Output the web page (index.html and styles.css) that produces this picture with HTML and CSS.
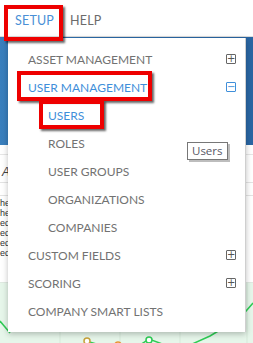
FILE: index.html
```html
<!DOCTYPE html>
<html lang="en">
<head>
  <meta charset="UTF-8">
  <meta name="viewport" content="width=device-width, initial-scale=1.0">
  <title>Setup menu</title>
  <link rel="stylesheet" href="styles.css">
</head>
<body>
  <div class="screen">
    <div class="topnav">
      <span class="nav-item active">SETUP</span>
      <span class="nav-item">HELP</span>
    </div>

    <div class="backdrop">
      <div class="hero"></div>
      <div class="grid">
        <div class="grid-row head"><span class="frag letter">A</span></div>
        <div class="grid-row thin"></div>
        <div class="grid-lines">
          <div>he</div><div>he</div><div>ed</div><div>ed</div><div>ed</div><div>ed</div>
        </div>
      </div>
      <div class="chart">
        <svg width="253" height="62" viewBox="0 0 253 62">
          <g stroke="#d6e9da" stroke-width="1">
            <line x1="60" y1="0" x2="60" y2="62"/>
            <line x1="120" y1="0" x2="120" y2="62"/>
            <line x1="180" y1="0" x2="180" y2="62"/>
            <line x1="247" y1="0" x2="247" y2="62"/>
          </g>
          <polyline points="0,38 10,50" fill="none" stroke="#2ecc55" stroke-width="1.5"/>
          <polyline points="86,58 100,62" fill="none" stroke="#2ecc55" stroke-width="1.5"/>
          <polyline points="85,60 98,62" fill="none" stroke="#e8912d" stroke-width="1.5"/>
          <polyline points="140,62 149,56 165,62" fill="none" stroke="#2ecc55" stroke-width="1.5"/>
          <polyline points="190,62 210,53 240,35 253,20" fill="none" stroke="#2ecc55" stroke-width="1.5"/>
          <circle cx="87" cy="58" r="3" fill="#fff" stroke="#c7a23a" stroke-width="1.5"/>
          <circle cx="118" cy="62" r="3" fill="#fff" stroke="#e8912d" stroke-width="1.5"/>
          <circle cx="149" cy="57" r="3" fill="#fff" stroke="#2ecc55" stroke-width="1.5"/>
        </svg>
      </div>
    </div>

    <div class="dropdown">
      <div class="item">ASSET MANAGEMENT <span class="toggle">+</span></div>
      <div class="item open">USER MANAGEMENT <span class="toggle">&minus;</span></div>
      <div class="item sub open">USERS</div>
      <div class="item sub">ROLES</div>
      <div class="item sub">USER GROUPS</div>
      <div class="item sub">ORGANIZATIONS</div>
      <div class="item sub">COMPANIES</div>
      <div class="item">CUSTOM FIELDS <span class="toggle">+</span></div>
      <div class="item">SCORING <span class="toggle">+</span></div>
      <div class="item">COMPANY SMART LISTS</div>
    </div>

    <div class="tooltip">Users</div>

    <div class="callout callout-setup"></div>
    <div class="callout callout-user-mgmt"></div>
    <div class="callout callout-users"></div>
  </div>
</body>
</html>
```

FILE: styles.css
```css
body { margin: 0; background: #fff; font-family: Lato, "Open Sans", sans-serif; }
.screen { position: relative; width: 253px; height: 343px; overflow: hidden; background: #fff; }

.topnav { height: 37px; border-bottom: 1px solid #dcdcdc; display: flex; align-items: center; gap: 16px; padding: 5px 0 0 15px; box-sizing: border-box; }
.nav-item { font-size: 12.5px; color: #6b6b6b; letter-spacing: 0.2px; }
.nav-item.active { color: #4a8fd6; }

.backdrop { display: flex; flex-direction: column; }
.hero { height: 108px; background: linear-gradient(90deg, #3a7fbd, #2b6aa8 40%, #2a66a3); }
.grid { height: 137px; font-family: "Liberation Sans", Arial, sans-serif; font-size: 9px; color: #333; }
.grid-row { border-bottom: 1px solid #e3e3e3; }
.grid-row.head { height: 17px; border-top: 1px solid #e6e6e6; margin-top: 9px; padding-top: 10px; }
.grid-row.thin { height: 12px; }
.frag { display: block; margin-left: 2px; }
.letter { font-style: italic; font-size: 12px; color: #444; }
.grid-lines { padding-top: 2px; }
.grid-lines div { height: 10px; line-height: 10px; }
.chart { height: 62px; background: #e6f6ea; border-top: 1px solid #dfe9e1; }
.chart svg { display: block; }

.dropdown { position: absolute; left: 8px; top: 38px; width: 237px; padding: 7px 0; background: #fff; border-right: 1px solid #cfcfcf; box-shadow: 0 2px 6px rgba(0, 0, 0, 0.25); }
.item { height: 28px; display: flex; align-items: center; padding: 0 9px 0 20px; font-size: 12px; color: #727272; }
.item.sub { padding-left: 40px; }
.item.open { color: #3f8fda; }
.toggle { margin-left: auto; width: 8px; height: 8px; border: 1px solid #666; border-radius: 1px; font-size: 10px; line-height: 8px; text-align: center; font-family: "DejaVu Sans", sans-serif; color: #555; }
.item.open .toggle { border-color: #3f8fda; color: #3f8fda; }

.tooltip { position: absolute; left: 187px; top: 142px; padding: 1px 4px 2px; border: 1px solid #777; background: #fff; color: #575765; font-family: "Open Sans", sans-serif; font-size: 11.5px; line-height: 13px; box-shadow: 2px 2px 0 #bdbdbd; }

.callout { position: absolute; border: 4px solid #ee0000; box-shadow: 2px 2px 2px rgba(0, 0, 0, 0.6); box-sizing: border-box; }
.callout-setup { left: 4px; top: 5px; width: 59px; height: 36px; }
.callout-user-mgmt { left: 17px; top: 71px; width: 135px; height: 30px; }
.callout-users { left: 39px; top: 100px; width: 65px; height: 29px; }
```
